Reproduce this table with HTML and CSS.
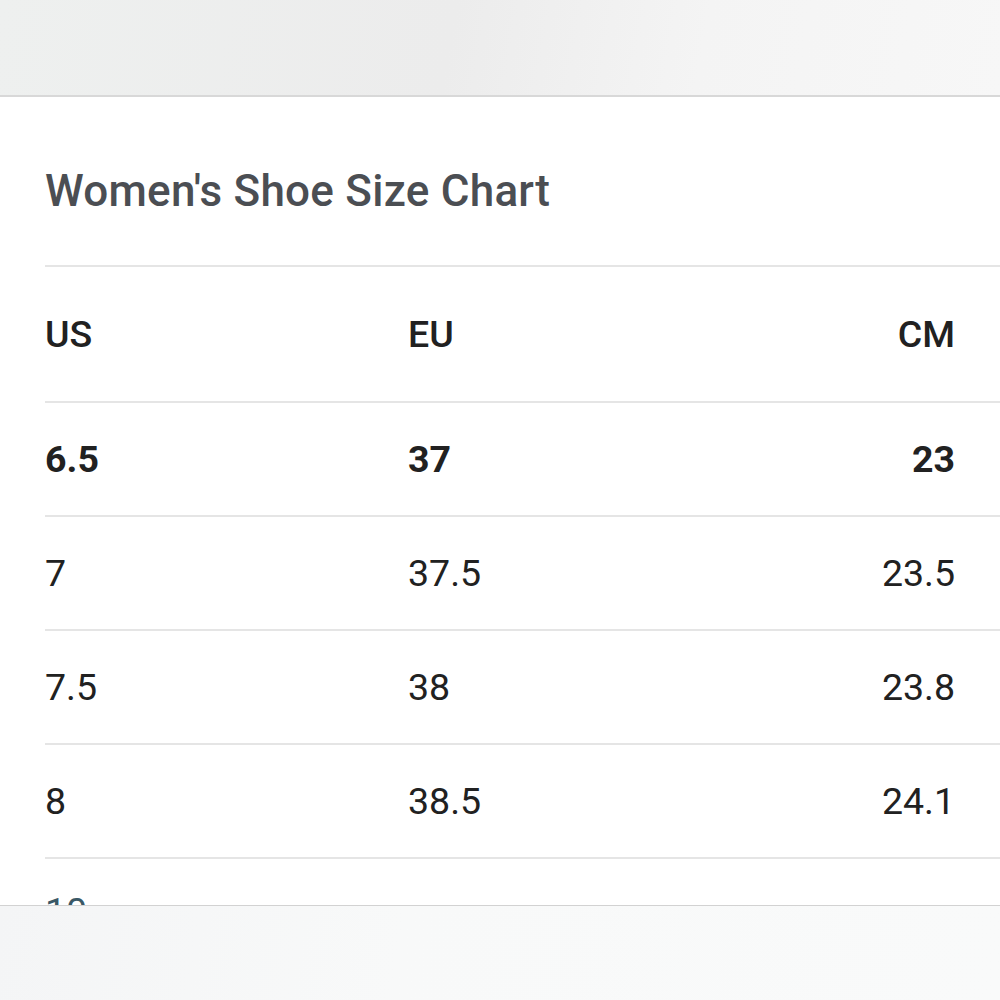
FILE: index.html
```html
<!DOCTYPE html>
<html>
<head>
<meta charset="utf-8">
<link rel="stylesheet" href="styles.css">
</head>
<body>
<div class="topbar"></div>
<main class="content">
  <h1 class="title">Women's Shoe Size Chart</h1>
  <div class="chart">
    <div class="row head"><span>US</span><span>EU</span><span>CM</span></div>
    <div class="row strong"><span>6.5</span><span>37</span><span>23</span></div>
    <div class="row"><span>7</span><span>37.5</span><span>23.5</span></div>
    <div class="row"><span>7.5</span><span>38</span><span>23.8</span></div>
    <div class="row"><span>8</span><span>38.5</span><span>24.1</span></div>
    <div class="row link"><span>10</span><span></span><span></span></div>
  </div>
</main>
<div class="bottombar"></div>
</body>
</html>
```
FILE: styles.css
```css
html, body {
  margin: 0;
  padding: 0;
  background: #ffffff;
  overflow: hidden;
  height: 1000px;
}
body {
  font-family: Roboto, "Liberation Sans", sans-serif;
  color: #212121;
}
.topbar {
  height: 95px;
  background: linear-gradient(100deg, #eef0ef 0%, #ececec 45%, #f4f4f4 70%, #f7f7f7 100%);
  border-bottom: 2px solid #d8d8d8;
}
.content {
  padding-left: 45px;
}
.title {
  margin: 0;
  height: 168px;
  box-sizing: border-box;
  padding-top: 66px;
  font-size: 44px;
  line-height: 56px;
  font-weight: 500;
  color: #4b4e53;
  letter-spacing: 0.25px;
}
.chart {
  border-top: 2px solid #e5e5e5;
}
.row {
  display: grid;
  grid-template-columns: 363px 1fr 200px;
  align-items: center;
  height: 112px;
  border-bottom: 2px solid #e5e5e5;
  font-size: 37.5px;
  padding-right: 45px;
}
.row span:last-child {
  text-align: right;
}
.row.head {
  height: 134px;
  font-weight: 500;
}
.row.strong {
  font-weight: 700;
}
.row.link {
  color: #3a5866;
  padding-bottom: 6px;
  box-sizing: border-box;
}
.bottombar {
  position: fixed;
  left: 0;
  right: 0;
  bottom: 0;
  height: 94px;
  background: linear-gradient(100deg, #f4f5f6 0%, #f8f9f9 40%, #f9fafa 100%);
  border-top: 1px solid #d2d2d2;
}
```
